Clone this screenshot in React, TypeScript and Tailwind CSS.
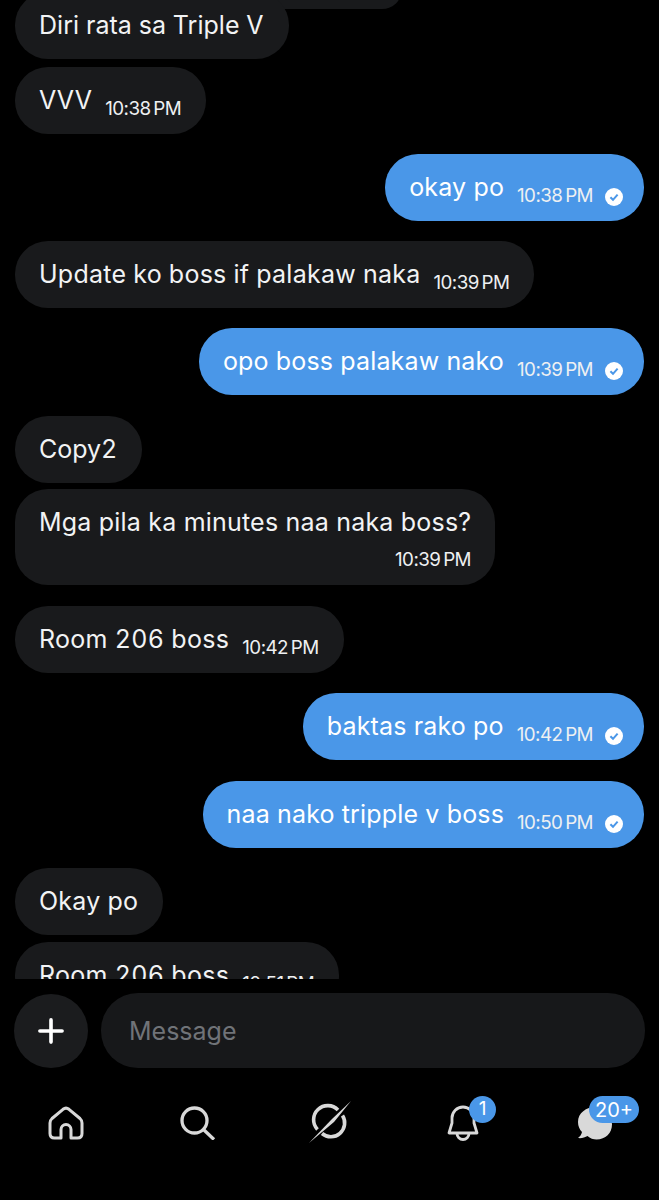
import { Plus } from 'lucide-react';

const font = "font-['Inter','Liberation_Sans',sans-serif]";

const Check = () => (
  <svg width="18" height="18" viewBox="0 0 18 18" className="ml-3">
    <circle cx="9" cy="9" r="9" fill="#fff" />
    <path d="M5.4 9.2 8 11.8 12.6 6.6" fill="none" stroke="#4a97e8" strokeWidth="2" />
  </svg>
);

const Time = ({ t }: { t: string }) => (
  <span className="ml-[13px] text-[18.8px] leading-[22px] tracking-[-0.55px] [word-spacing:-2px] text-[#eef0f2] whitespace-nowrap translate-y-[8px]">{t}</span>
);

const Them = ({ text, time, className = '', track = 'tracking-[0.25px]' }: { text: string; time?: string; className?: string; track?: string }) => (
  <div className={`self-start shrink-0 h-[67px] rounded-[33px] bg-[#191a1c] pl-6 pr-[25px] flex items-center ${className}`}>
    <span className={`text-[25px] tabular-nums text-[#f2f3f4] whitespace-nowrap ${track}`}>{text}</span>
    {time && <Time t={time} />}
  </div>
);

const Me = ({ text, time, className = '' }: { text: string; time: string; className?: string }) => (
  <div className={`self-end shrink-0 h-[67px] rounded-[33px] bg-[#4a97e8] pl-6 pr-[21px] flex items-center ${className}`}>
    <span className="text-[25px] tracking-[0.15px] text-white whitespace-nowrap">{text}</span>
    <Time t={time} />
    <span className="translate-y-[9px]"><Check /></span>
  </div>
);

const HomeIcon = () => (
  <svg width="36" height="34" viewBox="0 0 36 34" fill="none" stroke="#d9d9d9" strokeWidth="3" strokeLinejoin="round">
    <path d="M4 12.500 15 3.300Q18 1 21 3.300L32 12.500Q34 14.300 34 17V27.500Q34 32 29.500 32H23V23.500A5 5 0 0 0 13 23.500V32H6.500Q2 32 2 27.500V17Q2 14.300 4 12.500Z" />
  </svg>
);

const SearchIcon = () => (
  <svg width="36" height="34" viewBox="0 0 36 34" fill="none" stroke="#d9d9d9" strokeWidth="3.3">
    <circle cx="14.500" cy="14.500" r="12.500" />
    <path d="M24 24 34 33.500" />
  </svg>
);

const Explore = () => (
  <svg width="44" height="44" viewBox="0 0 44 44" fill="none" stroke="#d9d9d9" strokeWidth="3.6">
    <path d="M9.500 29.500A13.800 13.800 0 0 1 30 10" />
    <path d="M34.500 15.500A13.800 13.800 0 0 1 14 33.500" />
    <path d="M1 43 24 19 43 1 26 22Z" fill="#d9d9d9" stroke="none" />
  </svg>
);

const Bell = () => (
  <svg width="32" height="36" viewBox="0 0 32 36" fill="none" stroke="#d9d9d9" strokeWidth="2.8">
    <path d="M2 28h28L27 18v-5a11 11 0 0 0-22 0v5Z" strokeLinejoin="round" />
    <path d="M10 28.500a6 6 0 0 0 12 0" />
  </svg>
);

const Chat = () => (
  <svg width="36" height="34" viewBox="0 0 36 34" fill="#d9d9d9">
    <path d="M19 1C9 1 1 7 1 16c0 4 1.500 7.500 4 10-.500 2.500-2 4.500-4 6 3.500.500 7-.500 9.500-2 2.500 2.500 6 3.500 9 3.500 9 0 15.500-6.500 15.500-15S29 1 19 1Z" />
  </svg>
);

export default function App() {
  return (
    <div className={`h-[1200px] w-[659px] bg-black overflow-hidden flex flex-col ${font}`}>
      <div className="h-[979px] overflow-hidden shrink-0 flex flex-col px-[15px] relative">
        <div className="absolute left-[130px] -top-[12px] w-[272px] h-[21px] rounded-b-[20px] bg-[#191a1c]" />
        <Them text="Diri rata sa Triple V" track="tracking-[0.05px]" className="-mt-[8px] relative" />
        <Them text="VVV" time="10:38 PM" className="mt-[8px]" />
        <Me text="okay po" time="10:38 PM" className="mt-[20px]" />
        <Them text="Update ko boss if palakaw naka" time="10:39 PM" className="mt-[20px]" />
        <Me text="opo boss palakaw nako" time="10:39 PM" className="mt-[20px]" />
        <Them text="Copy2" track="tracking-[0px]" className="mt-[21px]" />
        <div className="self-start shrink-0 mt-[6px] h-[96px] w-[480px] rounded-[33px] bg-[#191a1c] px-6 pt-[18px] flex flex-col">
          <span className="text-[25px] leading-[30px] tracking-[0.2px] text-[#f2f3f4] whitespace-nowrap">Mga pila ka minutes naa naka boss?</span>
          <span className="self-end mt-[12px] text-[18.8px] leading-[22px] tracking-[-0.55px] [word-spacing:-2px] text-[#eef0f2]">10:39 PM</span>
        </div>
        <Them text="Room 206 boss" time="10:42 PM" track="tracking-[0.3px]" className="mt-[21px]" />
        <Me text="baktas rako po" time="10:42 PM" className="mt-[20px]" />
        <Me text="naa nako tripple v boss" time="10:50 PM" className="mt-[21px]" />
        <Them text="Okay po" className="mt-[20px]" />
        <Them text="Room 206 boss" time="10:51 PM" track="tracking-[0.3px]" className="mt-[7px]" />
      </div>

      <div className="flex items-center gap-[13px] px-[14px] mt-[14px]">
        <button className="w-[74px] h-[74px] rounded-full bg-[#1b1c1e] flex items-center justify-center shrink-0">
          <Plus size={38} strokeWidth={2.3} color="#fff" />
        </button>
        <div className="flex-1 h-[75px] rounded-[37px] bg-[#17181a] pl-[28px] pt-[2px] flex items-center text-[25px] text-[#707378]">Message</div>
      </div>

      <nav className="flex items-start pl-[48px] mt-[38px]">
        <HomeIcon />
        <div className="ml-[96px]"><SearchIcon /></div>
        <div className="ml-[92px] -mt-[6px]"><Explore /></div>
        <div className="relative ml-[95px] -mt-[1px]">
          <Bell />
          <span className="absolute -top-[9px] left-[22px] w-[27px] h-[27px] rounded-full bg-[#4a97e8] text-white text-[19px] flex items-center justify-center">1</span>
        </div>
        <div className="relative ml-[98px]">
          <Chat />
          <span className="absolute -top-[10px] left-[12px] h-[27px] px-[6px] rounded-full bg-[#4a97e8] text-white text-[20px] flex items-center">20+</span>
        </div>
      </nav>
    </div>
  );
}
